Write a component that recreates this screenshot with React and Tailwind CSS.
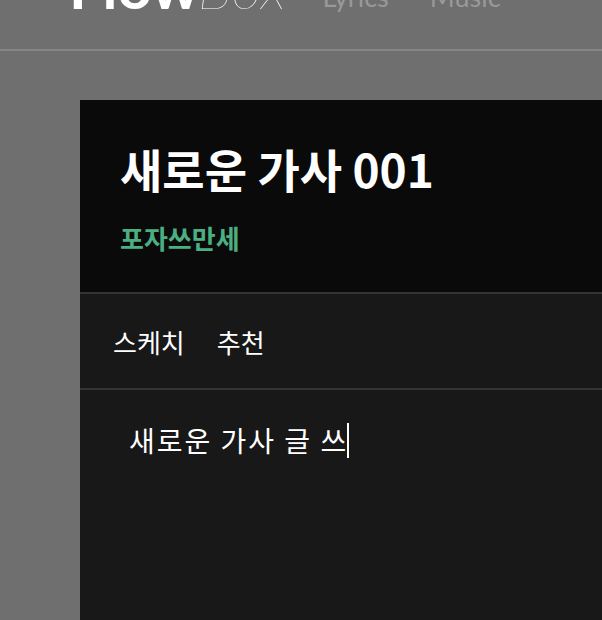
import { useState } from 'react';

const kr = { fontFamily: '"Noto Sans CJK KR", "Noto Sans", sans-serif' };
const latin = { fontFamily: 'Lato, "Open Sans", sans-serif' };

export default function App() {
  const [tab, setTab] = useState('sketch');
  return (
    <div className="w-full h-[620px] overflow-hidden bg-[#6f6f6f] flex flex-col" style={kr}>
      {/* Header */}
      <header className="h-[51px] shrink-0 border-b-2 border-[#858585] overflow-hidden flex items-end">
        <div className="flex items-end w-full pl-[69px] pb-[33px]">
          <div className="flex items-baseline leading-none text-[60px] text-white" style={latin}>
            <span className="font-bold">Flow</span>
            <span className="font-thin italic ml-[-2px]">Box</span>
          </div>
          <nav className="flex gap-[41px] ml-[37px] text-[27px] leading-none text-[#999] pb-[6px]" style={latin}>
            <span>Lyrics</span>
            <span>Music</span>
          </nav>
        </div>
      </header>

      {/* Editor card */}
      <div className="flex-1 flex pl-[80px] pt-[49px]">
        <div className="flex-1 flex flex-col bg-[#181818]">
          <div className="bg-[#0a0a0a] h-[194px] pl-[40px] pt-[40px] border-b-2 border-[#333]">
            <h1 className="text-[46px] font-bold text-white leading-[56px]">새로운 가사 001</h1>
            <p className="mt-[26px] text-[26px] font-semibold text-[#4caf82] leading-[32px]">포자쓰만세</p>
          </div>
          <div className="h-[96px] flex items-center gap-[32px] pl-[33px] border-b-2 border-[#333] text-[26px] text-white">
            <button onClick={() => setTab('sketch')} className="text-white">스케치</button>
            <button onClick={() => setTab('rec')} className="text-white">추천</button>
          </div>
          <div className="pl-[49px] pt-[30px] text-[28px] tracking-[2px] text-white leading-[40px] flex items-center">
            <span>새로운 가사 글 쓰</span>
            <span className="inline-block w-[2px] h-[35px] bg-white ml-[-1px]" />
          </div>
        </div>
      </div>
    </div>
  );
}
